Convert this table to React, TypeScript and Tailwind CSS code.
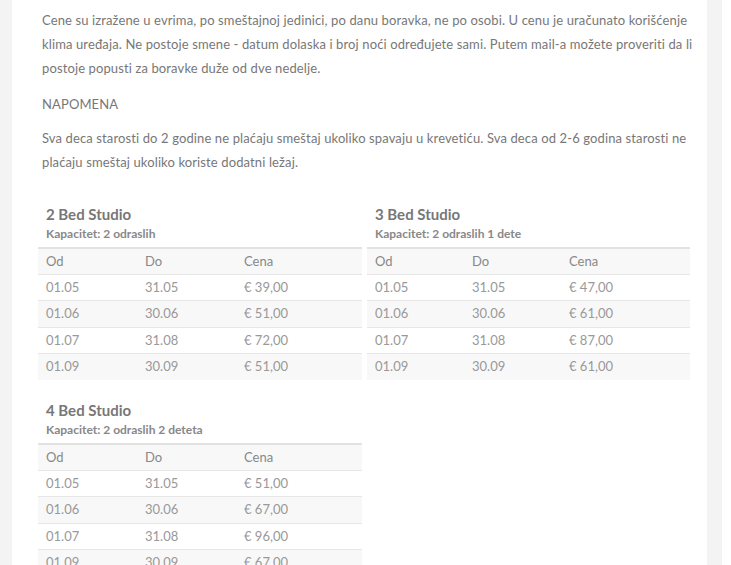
import React from 'react'

interface Row {
  od: string
  do: string
  cena: string
}

interface Studio {
  title: string
  kapacitet: string
  rows: Row[]
}

const studios: Studio[] = [
  {
    title: '2 Bed Studio',
    kapacitet: 'Kapacitet: 2 odraslih',
    rows: [
      { od: '01.05', do: '31.05', cena: '€ 39,00' },
      { od: '01.06', do: '30.06', cena: '€ 51,00' },
      { od: '01.07', do: '31.08', cena: '€ 72,00' },
      { od: '01.09', do: '30.09', cena: '€ 51,00' },
    ],
  },
  {
    title: '3 Bed Studio',
    kapacitet: 'Kapacitet: 2 odraslih 1 dete',
    rows: [
      { od: '01.05', do: '31.05', cena: '€ 47,00' },
      { od: '01.06', do: '30.06', cena: '€ 61,00' },
      { od: '01.07', do: '31.08', cena: '€ 87,00' },
      { od: '01.09', do: '30.09', cena: '€ 61,00' },
    ],
  },
  {
    title: '4 Bed Studio',
    kapacitet: 'Kapacitet: 2 odraslih 2 deteta',
    rows: [
      { od: '01.05', do: '31.05', cena: '€ 51,00' },
      { od: '01.06', do: '30.06', cena: '€ 67,00' },
      { od: '01.07', do: '31.08', cena: '€ 96,00' },
      { od: '01.09', do: '30.09', cena: '€ 67,00' },
    ],
  },
]

function PriceTable({ studio, col }: { studio: Studio; col: string }) {
  return (
    <div>
      <h3 className="pl-2 text-[15px] leading-5 font-bold text-[#777]">{studio.title}</h3>
      <p className="pl-2 text-[12px] leading-5 font-bold text-[#888]">{studio.kapacitet}</p>
      <table className="mt-[3px] w-full border-collapse text-[13px] text-[#999]">
        <thead>
          <tr className="bg-[#f8f8f8] border-t-2 border-[#e2e2e2] text-[#888]">
            <th className={col + ' px-2 h-[26px] text-left font-normal'}>Od</th>
            <th className={col + ' px-2 h-[26px] text-left font-normal'}>Do</th>
            <th className="px-2 h-[26px] text-left font-normal">Cena</th>
          </tr>
        </thead>
        <tbody>
          {studio.rows.map((r, i) => (
            <tr key={r.od} className={i % 2 === 1 ? 'bg-[#f8f8f8] border-t border-[#e6e6e6]' : 'bg-white border-t border-[#e6e6e6]'}>
              <td className="px-2 h-[26.5px]">{r.od}</td>
              <td className="px-2 h-[26.5px]">{r.do}</td>
              <td className="px-2 h-[26.5px]">{r.cena}</td>
            </tr>
          ))}
        </tbody>
      </table>
    </div>
  )
}

export default function App() {
  return (
    <div className="flex h-[565px] overflow-hidden bg-white" style={{ fontFamily: 'Lato, "Open Sans", sans-serif' }}>
      <div className="w-[12px] shrink-0 bg-[#f3f3f3]" />
      <div className="w-[695px] shrink-0 bg-white pt-2 pl-[30px] pr-[10px]">
        <p className="text-[13px] tracking-[0.12px] leading-6 text-[#777]">
          Cene su izražene u evrima, po smeštajnoj jedinici, po danu boravka, ne po osobi. U cenu je uračunato korišćenje klima uređaja. Ne postoje smene - datum dolaska i broj noći određujete sami. Putem mail-a možete proveriti da li postoje popusti za boravke duže od dve nedelje.
        </p>
        <p className="mt-3 text-[13px] tracking-[0.12px] leading-6 text-[#777]">NAPOMENA</p>
        <p className="mt-[10px] text-[13px] tracking-[0.12px] leading-6 text-[#777]">
          Sva deca starosti do 2 godine ne plaćaju smeštaj ukoliko spavaju u krevetiću. Sva deca od 2-6 godina starosti ne plaćaju smeštaj ukoliko koriste dodatni ležaj.
        </p>
        <div className="-ml-1 mt-[30px] grid grid-cols-[324px_323px] gap-x-[5px] gap-y-[20px]">
          <PriceTable studio={studios[0]} col="w-[99px]" />
          <PriceTable studio={studios[1]} col="w-[97px]" />
          <PriceTable studio={studios[2]} col="w-[99px]" />
        </div>
      </div>
      <div className="w-[15px] shrink-0 bg-[#f3f3f3]" />
      <div className="flex-1 bg-white" />
    </div>
  )
}
